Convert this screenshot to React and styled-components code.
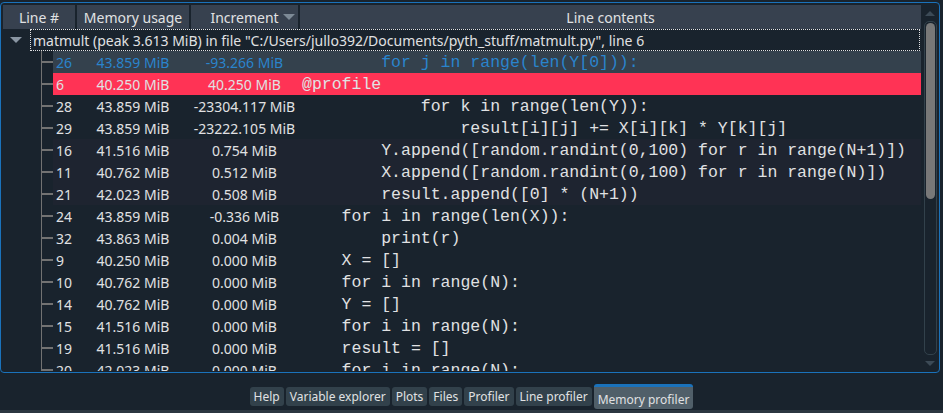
import React from 'react';
import styled, { createGlobalStyle } from 'styled-components';

const GlobalStyle = createGlobalStyle`
  html, body {
    margin: 0;
    background: #19232d;
  }
  body {
    font-family: "Noto Sans", "Liberation Sans", sans-serif;
    color: #e0e1e3;
  }
`;

const Page = styled.div`
  width: 943px;
  height: 413px;
  display: flex;
  flex-direction: column;
  background: #19232d;
  overflow: hidden;
`;

const Panel = styled.div`
  box-sizing: border-box;
  width: 940px;
  height: 371px;
  margin-top: 2px;
  border: 1px solid #1a72bb;
  border-radius: 4px;
  padding: 2px 1px 1px 2px;
  display: flex;
`;

const TreeView = styled.div`
  width: 918px;
  display: flex;
  flex-direction: column;
  overflow: hidden;
`;

const Header = styled.div`
  display: grid;
  grid-template-columns: 74px 114px 109px 1fr;
  height: 24px;
  flex-shrink: 0;
`;

const HeaderCell = styled.div`
  position: relative;
  background: #37414f;
  border-right: ${p => (p.$last ? 'none' : '2px solid #19232d')};
  display: flex;
  align-items: center;
  justify-content: center;
  font-size: 14px;
  white-space: nowrap;
`;

const SortArrow = styled.span`
  position: absolute;
  right: 3px;
  top: 9px;
  width: 0;
  height: 0;
  border-left: 6px solid transparent;
  border-right: 6px solid transparent;
  border-top: 6px solid #7d8a96;
`;

const Body = styled.div`
  flex: 1;
  overflow: hidden;
`;

const RootRow = styled.div`
  display: flex;
  align-items: center;
  height: 22px;
`;

const Expander = styled.div`
  width: 27px;
  height: 22px;
  display: flex;
  align-items: center;
  justify-content: center;
  flex-shrink: 0;

  &::before {
    content: '';
    margin-left: -2px;
    border-left: 6px solid transparent;
    border-right: 6px solid transparent;
    border-top: 6px solid #8a96a3;
  }
`;

const RootLabel = styled.div`
  box-sizing: border-box;
  flex: 1;
  height: 22px;
  margin-right: 1px;
  border: 1px dotted #e0e1e3;
  padding-left: 2px;
  display: flex;
  align-items: center;
  font-size: 14px;
  white-space: nowrap;
`;

const ChildRow = styled.div`
  display: flex;
  height: 22px;
`;

const Branch = styled.div`
  position: relative;
  width: 50px;
  flex-shrink: 0;

  &::before {
    content: '';
    position: absolute;
    left: 38px;
    top: 0;
    bottom: 0;
    width: 1px;
    background: #727272;
  }
  &::after {
    content: '';
    position: absolute;
    left: 38px;
    top: 10px;
    width: 12px;
    height: 2px;
    background: #727272;
  }
`;

const rowBg = {
  hover: '#34414d',
  selected: '#ff3355',
  alt: '#1e2430',
  plain: 'transparent',
};

const RowCells = styled.div`
  flex: 1;
  display: grid;
  grid-template-columns: 24px 114px 109px 1fr;
  align-items: center;
  background: ${p => rowBg[p.$kind]};
  color: ${p => (p.$kind === 'hover' ? '#2a84cc' : '#e0e1e3')};
  font-size: 14px;
  white-space: nowrap;
`;

const LineNo = styled.div`
  padding-left: 3px;
`;

const Centered = styled.div`
  text-align: center;
  padding-right: 2px;
`;

const Code = styled.div`
  padding-left: 2px;
  font-family: "Liberation Mono", "DejaVu Sans Mono", monospace;
  font-size: 16.5px;
  white-space: pre;
`;

const ScrollBar = styled.div`
  width: 16px;
  margin-left: 1px;
  display: flex;
  flex-direction: column;
  align-items: center;
`;

const ScrollArrow = styled.div`
  height: 16px;
  display: flex;
  align-items: center;
  justify-content: center;

  &::before {
    content: '';
    border-left: 5px solid transparent;
    border-right: 5px solid transparent;
    ${p => (p.$up ? 'border-bottom' : 'border-top')}: 5px solid #3c4a56;
  }
`;

const Track = styled.div`
  box-sizing: border-box;
  flex: 1;
  width: 13px;
  border: 1px solid #32414b;
  border-radius: 5px;
  padding: 1px;
`;

const Handle = styled.div`
  height: 176px;
  border-radius: 5px;
  background: #787878;
`;

const TabBar = styled.div`
  height: 37px;
  padding-top: 10px;
  box-sizing: border-box;
  display: flex;
  justify-content: center;
  align-items: center;
  gap: 2px;
`;

const Tab = styled.div`
  box-sizing: border-box;
  height: ${p => (p.$active ? '25px' : '19px')};
  padding: ${p => (p.$active ? '2px 4px 0' : '0 4px')};
  display: flex;
  align-items: center;
  background: ${p => (p.$active ? '#505f69' : '#32414b')};
  border-top: ${p => (p.$active ? '3px solid #1a72bb' : 'none')};
  border-radius: 3px;
  font-size: 12px;
  white-space: nowrap;
`;

const BottomStrip = styled.div`
  height: 3px;
  background: #2b3640;
`;

const rows = [
  ['26', '43.859 MiB', '-93.266 MiB', '        for j in range(len(Y[0])):', 'hover'],
  ['6', '40.250 MiB', '40.250 MiB', '@profile', 'selected'],
  ['28', '43.859 MiB', '-23304.117 MiB', '            for k in range(len(Y)):'],
  ['29', '43.859 MiB', '-23222.105 MiB', '                result[i][j] += X[i][k] * Y[k][j]'],
  ['16', '41.516 MiB', '0.754 MiB', '        Y.append([random.randint(0,100) for r in range(N+1)])', 'alt'],
  ['11', '40.762 MiB', '0.512 MiB', '        X.append([random.randint(0,100) for r in range(N)])', 'alt'],
  ['21', '42.023 MiB', '0.508 MiB', '        result.append([0] * (N+1))', 'alt'],
  ['24', '43.859 MiB', '-0.336 MiB', '    for i in range(len(X)):'],
  ['32', '43.863 MiB', '0.004 MiB', '        print(r)'],
  ['9', '40.250 MiB', '0.000 MiB', '    X = []'],
  ['10', '40.762 MiB', '0.000 MiB', '    for i in range(N):'],
  ['14', '40.762 MiB', '0.000 MiB', '    Y = []'],
  ['15', '41.516 MiB', '0.000 MiB', '    for i in range(N):'],
  ['19', '41.516 MiB', '0.000 MiB', '    result = []'],
  ['20', '42.023 MiB', '0.000 MiB', '    for i in range(N):'],
];

const tabs = ['Help', 'Variable explorer', 'Plots', 'Files', 'Profiler', 'Line profiler', 'Memory profiler'];

export default function App() {
  return (
    <Page>
      <GlobalStyle />
      <Panel>
        <TreeView>
          <Header>
            <HeaderCell>Line #</HeaderCell>
            <HeaderCell>Memory usage</HeaderCell>
            <HeaderCell>
              Increment
              <SortArrow />
            </HeaderCell>
            <HeaderCell $last>Line contents</HeaderCell>
          </Header>
          <Body>
            <RootRow>
              <Expander />
              <RootLabel>
                matmult (peak 3.613 MiB) in file "C:/Users/jullo392/Documents/pyth_stuff/matmult.py", line 6
              </RootLabel>
            </RootRow>
            {rows.map(([n, mem, inc, code, kind]) => (
              <ChildRow key={n}>
                <Branch />
                <RowCells $kind={kind || 'plain'}>
                  <LineNo>{n}</LineNo>
                  <Centered>{mem}</Centered>
                  <Centered>{inc}</Centered>
                  <Code>{code}</Code>
                </RowCells>
              </ChildRow>
            ))}
          </Body>
        </TreeView>
        <ScrollBar>
          <ScrollArrow $up />
          <Track>
            <Handle />
          </Track>
          <ScrollArrow />
        </ScrollBar>
      </Panel>
      <TabBar>
        {tabs.map(t => (
          <Tab key={t} $active={t === 'Memory profiler'}>
            {t}
          </Tab>
        ))}
      </TabBar>
      <BottomStrip />
    </Page>
  );
}
